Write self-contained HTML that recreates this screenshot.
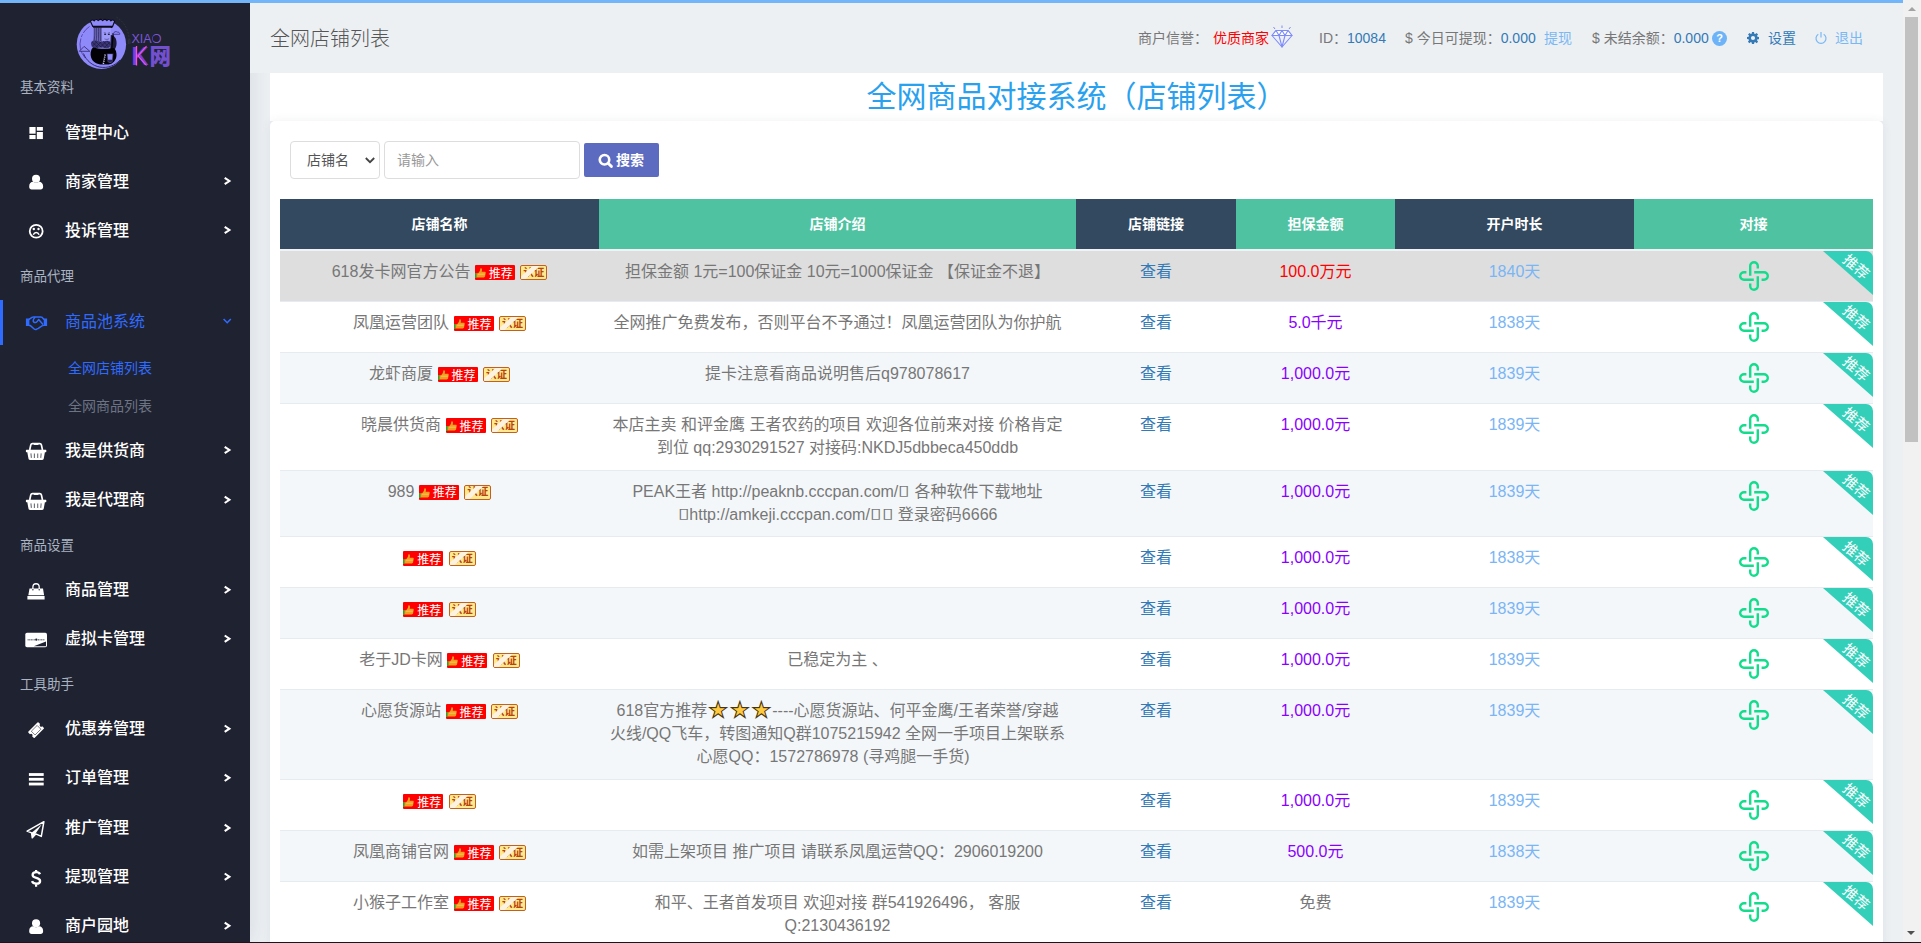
<!DOCTYPE html>
<html lang="zh-CN">
<head>
<meta charset="utf-8">
<title>全网店铺列表</title>
<style>
*{box-sizing:border-box}
html,body{margin:0;padding:0}
body{width:1921px;height:943px;overflow:hidden;position:relative;background:#ecf0f3;font-family:"Liberation Sans","Noto Sans CJK SC",sans-serif;font-size:14px;color:#777;line-height:1.42857}
a{text-decoration:none}
.pbar{position:absolute;left:0;top:0;width:1903px;height:3px;background:#72b5f8;z-index:50}
/* sidebar */
.sb{position:absolute;left:0;top:0;width:250px;height:943px;background:#1f2230;box-shadow:0 0 22px rgba(40,50,70,.11);z-index:5;color:#fff}
.logo{position:absolute;left:0;top:0;width:250px;height:75px}
.sb .lab{position:absolute;left:20px;font-size:13.5px;color:#a9b3c1;line-height:20px;height:20px;white-space:nowrap}
.sb .it{position:absolute;left:0;width:250px;height:45px;line-height:45px;font-size:16px;font-weight:500;color:#fff;white-space:nowrap}
.sb .it .tx{position:absolute;left:65px;top:0}
.sb svg.ov{position:absolute;left:0;top:0;pointer-events:none}
.sb .it.act{color:#2f6bff;font-weight:400}
.sb .it.act:before{content:"";position:absolute;left:0;top:1.3px;width:3px;height:45px;background:#2f6bff}
.sb .sub{position:absolute;left:68px;font-size:14px;line-height:20px;color:#6c7484;white-space:nowrap}
.sb .sub.on{color:#2f6bff}
/* header */
.hd{position:absolute;left:250px;top:0;width:1653px;height:73px;background:#ecf0f3;z-index:10}
.hd h1{position:absolute;left:20px;top:24px;margin:0;font-size:20px;font-weight:300;color:#555;line-height:30px;white-space:nowrap}
.hd .inf{position:absolute;top:28px;font-size:14px;line-height:20px;white-space:nowrap;color:#777}
.hd .bl{color:#337ab7}
.hd .lb{color:#7ab8f5}
.hd .rd{color:#f00}
/* main */
.tcard{position:absolute;left:270px;top:73px;width:1613px;height:48px;background:#fff;z-index:2}
.tcard h2{margin:0;position:absolute;left:0;top:4px;width:100%;text-align:center;font-size:30px;line-height:40px;font-weight:400;color:#2aa1ee;white-space:nowrap}
.panel{position:absolute;left:270px;top:121px;width:1613px;height:900px;background:#fff;border-radius:5px 5px 0 0;box-shadow:0 0 10px rgba(60,75,100,.08);z-index:3}
.sel{position:absolute;left:20px;top:20px;width:90px;height:38px;border:1px solid #ddd;border-radius:4px;background:#fff;font-size:14px;color:#555;line-height:36px;padding-left:16px}
.sel svg{position:absolute;right:3px;top:12px}
.inp{position:absolute;left:114px;top:20px;width:196px;height:38px;border:1px solid #ddd;border-radius:4px;background:#fff;font-size:14px;color:#999;line-height:36px;padding-left:12px}
.btn{position:absolute;left:314px;top:22px;width:75px;height:34px;border-radius:2px;background:#5c6bc0;color:#fff;font-size:14px;font-weight:700;line-height:34px}
.btn svg{position:absolute;left:14px;top:10px}
.btn span{position:absolute;left:32px;top:0}
table{position:absolute;left:10px;top:78px;width:1593px;border-collapse:separate;border-spacing:0;table-layout:fixed;font-size:16px;color:#777}
th{height:52px;padding:2px 0 0;background:#4fc3a1;color:#fff;font-size:14px;font-weight:700;text-align:center;border-bottom:2px solid #f0f3f6}
th.d{background:#324960}
td{height:51px;padding:10px 8px;text-align:center;vertical-align:top;border-top:1px solid #e6ebf0;line-height:22.857px;position:relative}
tbody tr:nth-child(odd){background:#f4f7fa}
tbody tr:nth-child(even){background:#fff}
tbody tr.hov{background:#dedede}
tbody tr:first-child td{border-top:0;height:50px}
.lk{color:#337ab7}
.red{color:#f00}.pur{color:#8a00ff}.gry{color:#777}.dy{color:#7ab5f5}
td.op{padding:10px 0 0}
.cross{display:block;margin:0 auto;position:relative;left:0;top:0}
.rb{position:absolute;right:0;top:0;width:50px;height:44px;overflow:hidden;border-top-right-radius:7px}
.rb:before{content:"";position:absolute;left:0;top:0;border-style:solid;border-width:0 50px 44px 0;border-color:transparent #33cfb9 transparent transparent}
.rb em{position:absolute;left:11.1px;top:7.2px;width:44px;font-style:normal;color:#fff;font-size:14.5px;line-height:18px;transform:rotate(41deg);transform-origin:50% 50%;text-align:center;white-space:nowrap}
.bd-tj{display:inline-block;vertical-align:-3px;width:40px;height:15px;background:#f00;border-radius:1px;position:relative;overflow:hidden}
.bd-tj svg{position:absolute;left:0;top:1px}
.bd-tj b{position:absolute;left:14px;top:1.5px;font-size:12px;line-height:15px;color:#fff;font-weight:400;letter-spacing:0}
.bd-rz{display:inline-block;vertical-align:-3px;width:27px;height:15px;background:#ffe98f;border:1px solid #c4601c;border-radius:2px;position:relative;overflow:hidden;margin-left:1px}
.bd-rz b{position:absolute;left:2px;top:-.3px;font-size:10.5px;line-height:13px;color:#b8430e;font-weight:700;letter-spacing:0}
.bd-rz:after{content:"";position:absolute;left:5px;top:-7px;width:5px;height:28px;background:#fcf2e0;transform:rotate(47deg)}
.tf{display:inline-block;width:11.8px;text-align:center;line-height:0;font-style:normal;font-family:"DejaVu Sans",sans-serif;font-size:14.5px;transform:translateY(-2.5px) scaleX(1.45)}
.star{display:inline-block;width:21.7px;text-align:center;line-height:0;color:#ffc93e;-webkit-text-stroke:2.2px #47350f;paint-order:stroke fill;font-family:"DejaVu Sans",sans-serif;font-size:17.5px}
/* scrollbar */
.scr{position:absolute;left:1903px;top:0;width:18px;height:943px;background:#f1f1f1;z-index:60}
.scr .thumb{position:absolute;left:2px;top:17px;width:13px;height:425px;background:#c1c1c1}
.scr .up{position:absolute;left:4.5px;top:7px;width:0;height:0;border:4.5px solid transparent;border-top:0;border-bottom:4.5px solid #a3a3a3}
.scr .dn{position:absolute;left:4px;top:931px;width:0;height:0;border:4.5px solid transparent;border-bottom:0;border-top:4.5px solid #505050}
.bline{position:absolute;left:0;top:942px;width:1921px;height:1px;background:#16181f;z-index:70}
</style>
</head>
<body>
<div class="pbar"></div>
<div class="sb">
<div class="logo"><svg width="250" height="75" viewBox="0 0 250 75">
<circle cx="101.400" cy="44.200" r="24.700" fill="#8e8af9"/>
<path d="M89.500 26.500a21.300 21.300 0 0 0-4.300 31.500" fill="none" stroke="#4b3a9c" stroke-width=".8" stroke-dasharray="9 1.500 3 1.500 30"/>
<path d="M83.500 53.500a21.600 21.600 0 0 0 36.500 6.500" fill="none" stroke="#2e2468" stroke-width=".9"/>
<path d="M116.500 17.200c7.500 4.500 12.300 12.500 12.800 23.500" fill="none" stroke="#3a3a48" stroke-width=".7" stroke-dasharray="1.600 1.600"/>
<path d="M128.300 39.500v4.500M130 39.500v4.500" stroke="#3a3a48" stroke-width=".7"/>
<path d="M90.400 21.200c1.200-1.600 2.600-1.600 3.800-.3 1.200-1.800 2.800-1.800 4-.3 1.300-1.700 3.200-1.700 4.500 0 1.300-1.600 3-1.600 4.200 0 1.200-1.500 2.800-1.500 4 .3 1.200-1.300 2.600-1.200 3.700.3l-2 5.300H92.800z" fill="#8e8af9" stroke="#0d0b18" stroke-width="1.100" stroke-linejoin="round"/>
<path d="M92.800 25.700h20l-.4 2.200H93.300z" fill="#0d0b18"/>
<path d="M93.400 27.800h8.600l.3 13.500-9.500 1.200c.6-4.500.8-9.500.6-14.700z" fill="#6e69be"/>
<path d="M94.800 28c.2 5-.1 9.500-.7 13.800M96.600 28c.2 5 0 9.500-.4 13.600M98.400 28c.2 5 .1 9 0 13.300M100.200 28l.2 13" stroke="#2b2658" stroke-width=".7" fill="none"/>
<path d="M102 27.800h8.800c.5 4.500.4 8.500-.4 12.500l-8.200 1z" fill="#9d99fa"/>
<path d="M104.200 34.300h1.900M107.900 34.300h1.900" stroke="#0d0b18" stroke-width="1"/>
<path d="M103.800 32.700l2.300.5M110 32.600l-2.200.6" stroke="#2b2658" stroke-width=".5"/>
<path d="M104.500 38.900c1.500.700 3.200.700 4.600-.2" stroke="#4a4590" stroke-width=".7" fill="none"/>
<path d="M110.800 35c3.500.5 5.800 3.500 5.800 8 0 3-1 5.500-2.500 7.200l-3.800-1.500z" fill="#1c1838"/>
<path d="M91 43.500c0-2.200 2-3.500 4.500-3 2 .4 3.500 1.200 5.500 1.200s3.800-1 6-1c2.500 0 4 1 4 3.200 0 2.800-2 4.300-4.500 4.300-2 0-3.500-.6-5.500-.6s-3.500.8-5.500.6c-2.500-.2-4.500-1.900-4.500-4.700z" fill="#3b3675"/>
<path d="M92 42l6 5.500M95 41l6.500 6.500M99 41.500l6 6M103 41l5.500 6M107 41l3.500 4M92 46.500l5-5M95.500 47.500l6-6M100 47.500l6-6M104.500 47.500l5.500-5.500" stroke="#151230" stroke-width=".5"/>
<path d="M93 47.300c-2.500 2.500-3 7-1.800 10.500 1.600 4.300 5.800 6.800 11 6.800h6.500c4.500-.8 7.500-4.500 7.800-9 .2-3-.6-5.800-2.600-7.600-5 1-15 1.300-20.900-.7z" fill="#020106"/>
<path d="M113.300 33l-1.900 19.500" stroke="#020106" stroke-width="1.300"/>
<path d="M113.300 33.600c.6-1.800 2.600-2.600 4-1.500 1.500-.3 2.600.8 2.400 2.200h-6.800z" fill="#8e8af9" stroke="#2e2468" stroke-width=".7" stroke-linejoin="round"/>
<path d="M106.900 53.600h6.300l-.4 7.400c-.1 1.300-1 2-2.700 2s-2.700-.700-2.800-2z" fill="#8e8af9" stroke="#0d0b18" stroke-width=".9"/>
<path d="M107.600 59.800h4.900v1.800c-1.500 1-3.400 1-4.900 0z" fill="#2b2658"/>
<path d="M105.200 54.500l-2 10" stroke="#d9d7ff" stroke-width="1.500" stroke-dasharray="1.100 1"/>
<path d="M79.300 51.300l4.800-4.900 5.700 4.900z" fill="#8e8af9" stroke="#2e2468" stroke-width=".8" stroke-linejoin="round"/>
<text x="131.500" y="43.200" font-family="Liberation Sans,sans-serif" font-size="13.500" fill="#7a56d6" textLength="30" lengthAdjust="spacingAndGlyphs" font-weight="400">XIAO</text>
<circle cx="156.100" cy="38.500" r="3.300" fill="#241d2e"/>
<text x="131.500" y="65" font-family="Liberation Sans,sans-serif" font-size="26.500" font-weight="700" fill="#7a3fe0" textLength="17" lengthAdjust="spacingAndGlyphs">K</text>
<path d="M136.500 46v19.500" stroke="#ff4fd8" stroke-width="1.300"/>
<path d="M146.500 46l-8.500 10 8.500 9.500" stroke="#ff4fd8" stroke-width="1.100" fill="none"/>
<text x="149.500" y="64" font-family="Noto Sans CJK SC,sans-serif" font-size="22" font-weight="900" fill="#7250d0" textLength="21.500" lengthAdjust="spacingAndGlyphs">网</text>
</svg></div>
<div class="lab" style="top:77.8px">基本资料</div>
<div class="it" style="top:109.5px"><span class="tx">管理中心</span></div>
<div class="it" style="top:158.5px"><span class="tx">商家管理</span></div>
<div class="it" style="top:207.5px"><span class="tx">投诉管理</span></div>
<div class="lab" style="top:266.8px">商品代理</div>
<div class="it act" style="top:298.7px"><span class="tx">商品池系统</span></div>
<a class="sub on" style="top:357.6px">全网店铺列表</a>
<a class="sub" style="top:395.7px">全网商品列表</a>
<div class="it" style="top:427.5px"><span class="tx">我是供货商</span></div>
<div class="it" style="top:477.3px"><span class="tx">我是代理商</span></div>
<div class="lab" style="top:535.8px">商品设置</div>
<div class="it" style="top:567.3px"><span class="tx">商品管理</span></div>
<div class="it" style="top:616.2px"><span class="tx">虚拟卡管理</span></div>
<div class="lab" style="top:674.7px">工具助手</div>
<div class="it" style="top:706.2px"><span class="tx">优惠券管理</span></div>
<div class="it" style="top:755.3px"><span class="tx">订单管理</span></div>
<div class="it" style="top:805.4px"><span class="tx">推广管理</span></div>
<div class="it" style="top:854.2px"><span class="tx">提现管理</span></div>
<div class="it" style="top:903.3px"><span class="tx">商户园地</span></div>
<svg class="ov" width="250" height="943" viewBox="0 0 250 943">
<g transform="translate(0 0)" fill="#fff"><rect x="29.400" y="127" width="6.200" height="6.700"/><rect x="29.400" y="135" width="6.200" height="4.050"/><rect x="36.800" y="127" width="6.100" height="3.700"/><rect x="36.800" y="132" width="6.100" height="7.050"/></g>
<g transform="translate(0 0)" fill="#fff"><circle cx="36.050" cy="178.700" r="4.050"/><path d="M29.200 186.200c0-2.800 1.700-4.500 4-4.500.9.700 1.800 1 2.900 1s2-.3 2.900-1c2.300 0 4.100 1.700 4.100 4.500v.8c0 1.400-1 2.400-2.400 2.400h-9.100c-1.400 0-2.400-1-2.400-2.400z"/></g>
<path d="M224.700 177.8l4.700 3.200-4.700 3.200" fill="none" stroke="#fff" stroke-width="2.100"/>
<g transform="translate(0 0)"><circle cx="36.200" cy="231.250" r="6.450" fill="none" stroke="#fff" stroke-width="1.800"/><circle cx="33.800" cy="229.050" r="1.200" fill="#fff"/><circle cx="38.500" cy="229.050" r="1.200" fill="#fff"/><path d="M33.300 234.700c.6-1.500 1.700-2.300 2.900-2.300s2.300.8 2.900 2.300" fill="none" stroke="#fff" stroke-width="1.500"/></g>
<path d="M224.700 226.8l4.700 3.200-4.700 3.200" fill="none" stroke="#fff" stroke-width="2.100"/>
<g transform="translate(0 0)"><path d="M25.900 318.600h3.500v7.500h-3.500zM43.700 318.600h3.400v7.500h-3.400z" fill="#2f6bff"/><g fill="none" stroke="#2f6bff" stroke-width="1.500" stroke-linejoin="round" stroke-linecap="round"><path d="M29.400 319.200l2.600-1.900c.5-.3 1-.4 1.500-.4h7.300c.5 0 1 .2 1.400.5l1.600 1.800"/><path d="M29.400 325.400l1 .2 3.500 3.100c.8.700 1.800.9 2.700.5l1.700-.9 3.700-2.400 1.800-.5"/><path d="M34.800 317.500c-1.100 1.100-1.800 2.300-1.600 3.500.3 1.500 1.900 1.900 3 1.300 1-.5 1.600-1.500 2.500-2.800l3.900 4.600"/></g></g>
<path d="M223.600 319l3.600 3.700 3.600-3.700" fill="none" stroke="#2f6bff" stroke-width="1.600"/>
<g transform="translate(0 0)"><path d="M29.700 450l1.100-5.100c.2-.8.800-1.300 1.600-1.300h7.400c.8 0 1.400.5 1.600 1.300l1.100 5.100" fill="none" stroke="#fff" stroke-width="1.700"/><rect x="33.600" y="443" width="5" height="2.100" rx="1" fill="#fff"/><path fill="#fff" d="M26.400 449.800h19.400c.3 0 .5.200.5.500v1.500c0 .3-.2.500-.5.500h-.9l-1.200 6.500c-.1.700-.7 1.200-1.400 1.200H29.900c-.7 0-1.300-.5-1.400-1.200l-1.200-6.500h-.9c-.3 0-.5-.2-.5-.5v-1.500c0-.3.200-.5.500-.5z"/><path d="M30.900 453.400l.5 4.500M34.400 453.400v4.500M37.700 453.400v4.500M41.200 453.400l-.5 4.500" stroke="#6b6e78" stroke-width="1.100"/></g>
<path d="M224.700 446.8l4.700 3.200-4.700 3.200" fill="none" stroke="#fff" stroke-width="2.100"/>
<g transform="translate(0 50)"><path d="M29.700 450l1.100-5.100c.2-.8.800-1.300 1.600-1.300h7.400c.8 0 1.400.5 1.600 1.300l1.100 5.100" fill="none" stroke="#fff" stroke-width="1.700"/><rect x="33.600" y="443" width="5" height="2.100" rx="1" fill="#fff"/><path fill="#fff" d="M26.400 449.800h19.400c.3 0 .5.200.5.500v1.500c0 .3-.2.500-.5.500h-.9l-1.200 6.500c-.1.700-.7 1.200-1.400 1.200H29.900c-.7 0-1.300-.5-1.400-1.200l-1.200-6.500h-.9c-.3 0-.5-.2-.5-.5v-1.500c0-.3.200-.5.500-.5z"/><path d="M30.900 453.400l.5 4.500M34.400 453.400v4.500M37.700 453.400v4.500M41.200 453.400l-.5 4.500" stroke="#6b6e78" stroke-width="1.100"/></g>
<path d="M224.700 496.6l4.700 3.200-4.700 3.200" fill="none" stroke="#fff" stroke-width="2.100"/>
<g transform="translate(0 0)"><path d="M32.900 589.600v-2.700a3.150 3.150 0 0 1 6.300 0v2.700" fill="none" stroke="#fff" stroke-width="1.300"/><path fill="#fff" d="M29.500 588.400h13.500l1.100 6.800H28.300zM27.400 595.900h17.200v3.500H27.400z"/><circle cx="32.900" cy="589.800" r=".7" fill="#1f2230"/><circle cx="39.200" cy="589.800" r=".7" fill="#1f2230"/></g>
<path d="M224.700 586.6l4.700 3.200-4.700 3.200" fill="none" stroke="#fff" stroke-width="2.100"/>
<g transform="translate(0 0)"><rect x="25.300" y="632.800" width="21.700" height="14.500" rx="1.700" fill="#fff"/><path d="M46 641.500v4.800H33.800z" fill="#1f2230"/><circle cx="36.300" cy="639.700" r="1.150" fill="#1f2230"/><path d="M27.600 639.700h7.200M37.900 639.700h6.800" stroke="#7a7d86" stroke-width="1.500" stroke-dasharray="1.100 .5"/></g>
<path d="M224.700 635.5l4.700 3.200-4.700 3.200" fill="none" stroke="#fff" stroke-width="2.100"/>
<g transform="translate(36.100 730.2) rotate(-45)"><path fill="#fff" d="M-7.150 -3.650a.8.8 0 0 1 .8-.8h12.700a.8.8 0 0 1 .8.8v2.150a1.500 1.500 0 0 0 0 3v2.150a.8.8 0 0 1-.8.8h-12.700a.8.800 0 0 1-.8-.8v-2.150a1.500 1.500 0 0 0 0-3z"/><rect x="-4.100" y="-2.650" width="8.200" height="5.300" fill="none" stroke="#1f2230" stroke-width=".55"/></g>
<path d="M224.700 725.5l4.700 3.200-4.700 3.200" fill="none" stroke="#fff" stroke-width="2.100"/>
<g transform="translate(0 0)" fill="#fff"><rect x="28.900" y="773.100" width="14.800" height="2.850"/><rect x="28.900" y="777.850" width="14.800" height="2.850"/><rect x="28.900" y="782.600" width="14.800" height="2.850"/></g>
<path d="M224.700 774.6l4.700 3.200-4.700 3.200" fill="none" stroke="#fff" stroke-width="2.100"/>
<g transform="translate(23.600 818)"><path d="M20.300 3.700L3.500 13.100l4.500 1.800.7 4.900 3.400-3.900 5.600 2.500z" fill="none" stroke="#fff" stroke-width="1.500" stroke-linejoin="round"/><path d="M8 14.800L18.300 6.200 12 15.600l-3.300 4.300z" fill="#fff"/></g>
<path d="M224.700 824.7l4.700 3.200-4.700 3.200" fill="none" stroke="#fff" stroke-width="2.100"/>
<g transform="translate(0 0)"><path d="M40 874.300c-.6-1.400-2-2.100-3.800-2.100-2.100 0-3.600 1-3.600 2.700 0 1.700 1.400 2.300 3.700 2.900 2.300.6 3.800 1.300 3.800 3.100 0 1.800-1.600 2.800-3.800 2.800-2.100 0-3.700-.9-4.300-2.500" fill="none" stroke="#fff" stroke-width="2.300"/><path d="M36.100 869.900v2.500M36.100 884.300v2.400" stroke="#fff" stroke-width="2.200"/></g>
<path d="M224.700 873.5l4.700 3.200-4.700 3.200" fill="none" stroke="#fff" stroke-width="2.100"/>
<g transform="translate(0 744.6)" fill="#fff"><circle cx="36.050" cy="178.700" r="4.050"/><path d="M29.200 186.200c0-2.800 1.700-4.500 4-4.500.9.700 1.800 1 2.900 1s2-.3 2.900-1c2.300 0 4.100 1.700 4.100 4.500v.8c0 1.400-1 2.400-2.400 2.400h-9.100c-1.400 0-2.400-1-2.400-2.400z"/></g>
<path d="M224.700 922.6l4.700 3.200-4.700 3.200" fill="none" stroke="#fff" stroke-width="2.100"/>
</svg>
</div>
<div class="hd">
<h1>全网店铺列表</h1>
<span class="inf" style="left:888px">商户信誉：</span>
<span class="inf rd" style="left:963px">优质商家</span>
<svg style="position:absolute;left:1020px;top:24px" width="24" height="24" viewBox="0 0 24 24"><g fill="none" stroke="#7d8cf6" stroke-width="1.100" stroke-linejoin="round"><path d="M6 6.500h12l4 5-10 11.500L2 11.500z" fill="#eef0ff"/><path d="M6 6.500h12l4 5H2z" fill="#fff"/><path d="M2 11.500h20M6 6.500l3 5 3 11.500 3-11.500 3-5M9 11.500l3-5 3 5"/><path d="M12 1.500v2.500M3.500 3l1.500 2M20.500 3L19 5" stroke-width="1"/></g></svg>
<span class="inf" style="left:1069px">ID：<span class="bl">10084</span></span>
<span class="inf" style="left:1155px">$ 今日可提现：<span class="bl">0.000</span></span>
<span class="inf lb" style="left:1294px">提现</span>
<span class="inf" style="left:1342px">$ 未结余额：<span class="bl">0.000</span></span>
<span style="position:absolute;left:1462px;top:31px;width:15px;height:15px;border-radius:50%;background:#6db3f7;color:#fff;font-size:11px;font-weight:700;line-height:15px;text-align:center">?</span>
<svg style="position:absolute;left:1497px;top:32px" width="12" height="12" viewBox="0 0 14 14"><path fill="#337ab7" fill-rule="evenodd" d="M5.800 0h2.400l.3 1.900 1.100.5 1.600-1.200 1.700 1.700-1.200 1.600.5 1.100 1.900.300v2.400l-1.900.3-.5 1.100 1.200 1.600-1.700 1.700-1.600-1.200-1.100.5-.3 1.900H5.800l-.3-1.900-1.100-.5-1.600 1.200-1.700-1.700 1.200-1.600-.5-1.100L0 8.200V5.800l1.900-.3.500-1.100-1.200-1.600 1.700-1.700 1.600 1.200 1.100-.5zM7 4.600a2.400 2.400 0 1 0 0 4.800 2.400 2.400 0 0 0 0-4.800z"/></svg>
<span class="inf bl" style="left:1518px">设置</span>
<svg style="position:absolute;left:1564px;top:31px" width="14" height="14" viewBox="0 0 14 14"><path d="M4.300 3.200a5 5 0 1 0 5.400 0M7 1v5.500" fill="none" stroke="#7ab8f5" stroke-width="1.200"/></svg>
<span class="inf lb" style="left:1585px">退出</span>
</div>
<div class="tcard"><h2>全网商品对接系统（店铺列表）</h2></div>
<div class="panel">
<div class="sel">店铺名<svg width="12" height="12" viewBox="0 0 12 12"><path d="M1.800 4l4.200 4.200 4.200-4.200" fill="none" stroke="#444" stroke-width="1.800"/></svg></div>
<div class="inp">请输入</div>
<div class="btn"><svg width="16" height="16" viewBox="0 0 16 16"><circle cx="6.500" cy="6.700" r="4.750" fill="none" stroke="#fff" stroke-width="2.600"/><path d="M10.100 10.300l3.300 3.100" stroke="#fff" stroke-width="2.900" stroke-linecap="round"/></svg><span>搜索</span></div>
<table>
<colgroup><col style="width:319px"><col style="width:477px"><col style="width:160px"><col style="width:159px"><col style="width:239px"><col style="width:239px"></colgroup>
<thead><tr><th class="d">店铺名称</th><th>店铺介绍</th><th class="d">店铺链接</th><th>担保金额</th><th class="d">开户时长</th><th>对接</th></tr></thead>
<tbody>
<tr class="hov"><td>618发卡网官方公告 <span class="bd-tj"><svg class="th" width="12" height="13" viewBox="0 0 12 13"><path d="M1 7.2h2.2l1.3-1.6c.5-.7.6-1.6.7-2.6 0-.5.4-.9.9-.8.7.1 1 .8.9 1.700l-.3 1.900h3c.7 0 1.100.5 1 1.100l-.6 3.400c-.1.700-.6 1.100-1.300 1.100H1z" fill="#f0a020"/><path d="M0 7h1.600v5H0z" fill="#3a9a2a"/><path d="M3.500 8.200h6.500" stroke="#fff3c0" stroke-width=".8" stroke-dasharray="1 1"/></svg><b>推荐</b></span> <span class="bd-rz"><b>认证</b></span></td><td>担保金额 1元=100保证金 10元=1000保证金 【保证金不退】</td><td><a class="lk">查看</a></td><td class="red">100.0万元</td><td class="dy">1840天</td><td class="op"><svg class="cross" width="30" height="30" viewBox="0 0 30 30"><g fill="none" stroke="#13dc8c" stroke-width="2.4"><path d="M11.2 14.8V5a3.8 3.8 0 0 1 7.6 0v2.500"/><path d="M15.2 11.2H25a3.8 3.8 0 0 1 0 7.6h-2.400"/><path d="M18.8 15.2V25a3.8 3.8 0 0 1-7.6 0v-2.500"/><path d="M14.8 18.8H5a3.8 3.8 0 0 1 0-7.6h2.400"/></g></svg><span class="rb"><em>推荐</em></span></td></tr>
<tr><td>凤凰运营团队 <span class="bd-tj"><svg class="th" width="12" height="13" viewBox="0 0 12 13"><path d="M1 7.2h2.2l1.3-1.6c.5-.7.6-1.6.7-2.6 0-.5.4-.9.9-.8.7.1 1 .8.9 1.700l-.3 1.900h3c.7 0 1.100.5 1 1.100l-.6 3.400c-.1.700-.6 1.100-1.300 1.100H1z" fill="#f0a020"/><path d="M0 7h1.600v5H0z" fill="#3a9a2a"/><path d="M3.500 8.200h6.500" stroke="#fff3c0" stroke-width=".8" stroke-dasharray="1 1"/></svg><b>推荐</b></span> <span class="bd-rz"><b>认证</b></span></td><td>全网推广免费发布，否则平台不予通过！凤凰运营团队为你护航</td><td><a class="lk">查看</a></td><td class="pur">5.0千元</td><td class="dy">1838天</td><td class="op"><svg class="cross" width="30" height="30" viewBox="0 0 30 30"><g fill="none" stroke="#13dc8c" stroke-width="2.4"><path d="M11.2 14.8V5a3.8 3.8 0 0 1 7.6 0v2.500"/><path d="M15.2 11.2H25a3.8 3.8 0 0 1 0 7.6h-2.400"/><path d="M18.8 15.2V25a3.8 3.8 0 0 1-7.6 0v-2.500"/><path d="M14.8 18.8H5a3.8 3.8 0 0 1 0-7.6h2.400"/></g></svg><span class="rb"><em>推荐</em></span></td></tr>
<tr><td>龙虾商厦 <span class="bd-tj"><svg class="th" width="12" height="13" viewBox="0 0 12 13"><path d="M1 7.2h2.2l1.3-1.6c.5-.7.6-1.6.7-2.6 0-.5.4-.9.9-.8.7.1 1 .8.9 1.700l-.3 1.900h3c.7 0 1.100.5 1 1.100l-.6 3.400c-.1.700-.6 1.100-1.300 1.100H1z" fill="#f0a020"/><path d="M0 7h1.600v5H0z" fill="#3a9a2a"/><path d="M3.500 8.200h6.500" stroke="#fff3c0" stroke-width=".8" stroke-dasharray="1 1"/></svg><b>推荐</b></span> <span class="bd-rz"><b>认证</b></span></td><td>提卡注意看商品说明售后q978078617</td><td><a class="lk">查看</a></td><td class="pur">1,000.0元</td><td class="dy">1839天</td><td class="op"><svg class="cross" width="30" height="30" viewBox="0 0 30 30"><g fill="none" stroke="#13dc8c" stroke-width="2.4"><path d="M11.2 14.8V5a3.8 3.8 0 0 1 7.6 0v2.500"/><path d="M15.2 11.2H25a3.8 3.8 0 0 1 0 7.6h-2.400"/><path d="M18.8 15.2V25a3.8 3.8 0 0 1-7.6 0v-2.500"/><path d="M14.8 18.8H5a3.8 3.8 0 0 1 0-7.6h2.400"/></g></svg><span class="rb"><em>推荐</em></span></td></tr>
<tr><td>晓晨供货商 <span class="bd-tj"><svg class="th" width="12" height="13" viewBox="0 0 12 13"><path d="M1 7.2h2.2l1.3-1.6c.5-.7.6-1.6.7-2.6 0-.5.4-.9.9-.8.7.1 1 .8.9 1.700l-.3 1.900h3c.7 0 1.100.5 1 1.100l-.6 3.400c-.1.700-.6 1.100-1.300 1.100H1z" fill="#f0a020"/><path d="M0 7h1.600v5H0z" fill="#3a9a2a"/><path d="M3.500 8.200h6.500" stroke="#fff3c0" stroke-width=".8" stroke-dasharray="1 1"/></svg><b>推荐</b></span> <span class="bd-rz"><b>认证</b></span></td><td>本店主卖 和评金鹰 王者农药的项目 欢迎各位前来对接 价格肯定<br>到位 qq:2930291527 对接码:NKDJ5dbbeca450ddb</td><td><a class="lk">查看</a></td><td class="pur">1,000.0元</td><td class="dy">1839天</td><td class="op"><svg class="cross" width="30" height="30" viewBox="0 0 30 30"><g fill="none" stroke="#13dc8c" stroke-width="2.4"><path d="M11.2 14.8V5a3.8 3.8 0 0 1 7.6 0v2.500"/><path d="M15.2 11.2H25a3.8 3.8 0 0 1 0 7.6h-2.400"/><path d="M18.8 15.2V25a3.8 3.8 0 0 1-7.6 0v-2.500"/><path d="M14.8 18.8H5a3.8 3.8 0 0 1 0-7.6h2.400"/></g></svg><span class="rb"><em>推荐</em></span></td></tr>
<tr><td>989 <span class="bd-tj"><svg class="th" width="12" height="13" viewBox="0 0 12 13"><path d="M1 7.2h2.2l1.3-1.6c.5-.7.6-1.6.7-2.6 0-.5.4-.9.9-.8.7.1 1 .8.9 1.700l-.3 1.900h3c.7 0 1.100.5 1 1.100l-.6 3.400c-.1.700-.6 1.100-1.300 1.100H1z" fill="#f0a020"/><path d="M0 7h1.600v5H0z" fill="#3a9a2a"/><path d="M3.500 8.200h6.500" stroke="#fff3c0" stroke-width=".8" stroke-dasharray="1 1"/></svg><b>推荐</b></span> <span class="bd-rz"><b>认证</b></span></td><td>PEAK王者 http://peaknb.cccpan.com/<i class="tf">▯</i> 各种软件下载地址<br><i class="tf">▯</i>http://amkeji.cccpan.com/<i class="tf">▯</i><i class="tf">▯</i> 登录密码6666</td><td><a class="lk">查看</a></td><td class="pur">1,000.0元</td><td class="dy">1839天</td><td class="op"><svg class="cross" width="30" height="30" viewBox="0 0 30 30"><g fill="none" stroke="#13dc8c" stroke-width="2.4"><path d="M11.2 14.8V5a3.8 3.8 0 0 1 7.6 0v2.500"/><path d="M15.2 11.2H25a3.8 3.8 0 0 1 0 7.6h-2.400"/><path d="M18.8 15.2V25a3.8 3.8 0 0 1-7.6 0v-2.500"/><path d="M14.8 18.8H5a3.8 3.8 0 0 1 0-7.6h2.400"/></g></svg><span class="rb"><em>推荐</em></span></td></tr>
<tr><td><span class="bd-tj"><svg class="th" width="12" height="13" viewBox="0 0 12 13"><path d="M1 7.2h2.2l1.3-1.6c.5-.7.6-1.6.7-2.6 0-.5.4-.9.9-.8.7.1 1 .8.9 1.700l-.3 1.900h3c.7 0 1.100.5 1 1.100l-.6 3.400c-.1.700-.6 1.100-1.300 1.100H1z" fill="#f0a020"/><path d="M0 7h1.600v5H0z" fill="#3a9a2a"/><path d="M3.500 8.200h6.500" stroke="#fff3c0" stroke-width=".8" stroke-dasharray="1 1"/></svg><b>推荐</b></span> <span class="bd-rz"><b>认证</b></span></td><td></td><td><a class="lk">查看</a></td><td class="pur">1,000.0元</td><td class="dy">1838天</td><td class="op"><svg class="cross" width="30" height="30" viewBox="0 0 30 30"><g fill="none" stroke="#13dc8c" stroke-width="2.4"><path d="M11.2 14.8V5a3.8 3.8 0 0 1 7.6 0v2.500"/><path d="M15.2 11.2H25a3.8 3.8 0 0 1 0 7.6h-2.400"/><path d="M18.8 15.2V25a3.8 3.8 0 0 1-7.6 0v-2.500"/><path d="M14.8 18.8H5a3.8 3.8 0 0 1 0-7.6h2.400"/></g></svg><span class="rb"><em>推荐</em></span></td></tr>
<tr><td><span class="bd-tj"><svg class="th" width="12" height="13" viewBox="0 0 12 13"><path d="M1 7.2h2.2l1.3-1.6c.5-.7.6-1.6.7-2.6 0-.5.4-.9.9-.8.7.1 1 .8.9 1.700l-.3 1.900h3c.7 0 1.100.5 1 1.100l-.6 3.400c-.1.700-.6 1.100-1.300 1.100H1z" fill="#f0a020"/><path d="M0 7h1.600v5H0z" fill="#3a9a2a"/><path d="M3.500 8.200h6.500" stroke="#fff3c0" stroke-width=".8" stroke-dasharray="1 1"/></svg><b>推荐</b></span> <span class="bd-rz"><b>认证</b></span></td><td></td><td><a class="lk">查看</a></td><td class="pur">1,000.0元</td><td class="dy">1839天</td><td class="op"><svg class="cross" width="30" height="30" viewBox="0 0 30 30"><g fill="none" stroke="#13dc8c" stroke-width="2.4"><path d="M11.2 14.8V5a3.8 3.8 0 0 1 7.6 0v2.500"/><path d="M15.2 11.2H25a3.8 3.8 0 0 1 0 7.6h-2.400"/><path d="M18.8 15.2V25a3.8 3.8 0 0 1-7.6 0v-2.500"/><path d="M14.8 18.8H5a3.8 3.8 0 0 1 0-7.6h2.400"/></g></svg><span class="rb"><em>推荐</em></span></td></tr>
<tr><td>老于JD卡网 <span class="bd-tj"><svg class="th" width="12" height="13" viewBox="0 0 12 13"><path d="M1 7.2h2.2l1.3-1.6c.5-.7.6-1.6.7-2.6 0-.5.4-.9.9-.8.7.1 1 .8.9 1.700l-.3 1.900h3c.7 0 1.100.5 1 1.100l-.6 3.400c-.1.700-.6 1.100-1.300 1.100H1z" fill="#f0a020"/><path d="M0 7h1.600v5H0z" fill="#3a9a2a"/><path d="M3.500 8.200h6.500" stroke="#fff3c0" stroke-width=".8" stroke-dasharray="1 1"/></svg><b>推荐</b></span> <span class="bd-rz"><b>认证</b></span></td><td>已稳定为主 、</td><td><a class="lk">查看</a></td><td class="pur">1,000.0元</td><td class="dy">1839天</td><td class="op"><svg class="cross" width="30" height="30" viewBox="0 0 30 30"><g fill="none" stroke="#13dc8c" stroke-width="2.4"><path d="M11.2 14.8V5a3.8 3.8 0 0 1 7.6 0v2.500"/><path d="M15.2 11.2H25a3.8 3.8 0 0 1 0 7.6h-2.400"/><path d="M18.8 15.2V25a3.8 3.8 0 0 1-7.6 0v-2.500"/><path d="M14.8 18.8H5a3.8 3.8 0 0 1 0-7.6h2.400"/></g></svg><span class="rb"><em>推荐</em></span></td></tr>
<tr><td>心愿货源站 <span class="bd-tj"><svg class="th" width="12" height="13" viewBox="0 0 12 13"><path d="M1 7.2h2.2l1.3-1.6c.5-.7.6-1.6.7-2.6 0-.5.4-.9.9-.8.7.1 1 .8.9 1.700l-.3 1.900h3c.7 0 1.100.5 1 1.100l-.6 3.400c-.1.700-.6 1.100-1.300 1.100H1z" fill="#f0a020"/><path d="M0 7h1.600v5H0z" fill="#3a9a2a"/><path d="M3.500 8.200h6.500" stroke="#fff3c0" stroke-width=".8" stroke-dasharray="1 1"/></svg><b>推荐</b></span> <span class="bd-rz"><b>认证</b></span></td><td>618官方推荐<span class="star">★</span><span class="star">★</span><span class="star">★</span>----心愿货源站、何平金鹰/王者荣誉/穿越<br>火线/QQ飞车，转图通知Q群1075215942 全网一手项目上架联系<br>心愿QQ：1572786978 (寻鸡腿一手货)&nbsp;&nbsp;</td><td><a class="lk">查看</a></td><td class="pur">1,000.0元</td><td class="dy">1839天</td><td class="op"><svg class="cross" width="30" height="30" viewBox="0 0 30 30"><g fill="none" stroke="#13dc8c" stroke-width="2.4"><path d="M11.2 14.8V5a3.8 3.8 0 0 1 7.6 0v2.500"/><path d="M15.2 11.2H25a3.8 3.8 0 0 1 0 7.6h-2.400"/><path d="M18.8 15.2V25a3.8 3.8 0 0 1-7.6 0v-2.500"/><path d="M14.8 18.8H5a3.8 3.8 0 0 1 0-7.6h2.400"/></g></svg><span class="rb"><em>推荐</em></span></td></tr>
<tr><td><span class="bd-tj"><svg class="th" width="12" height="13" viewBox="0 0 12 13"><path d="M1 7.2h2.2l1.3-1.6c.5-.7.6-1.6.7-2.6 0-.5.4-.9.9-.8.7.1 1 .8.9 1.700l-.3 1.900h3c.7 0 1.100.5 1 1.100l-.6 3.400c-.1.700-.6 1.100-1.300 1.100H1z" fill="#f0a020"/><path d="M0 7h1.600v5H0z" fill="#3a9a2a"/><path d="M3.500 8.200h6.500" stroke="#fff3c0" stroke-width=".8" stroke-dasharray="1 1"/></svg><b>推荐</b></span> <span class="bd-rz"><b>认证</b></span></td><td></td><td><a class="lk">查看</a></td><td class="pur">1,000.0元</td><td class="dy">1839天</td><td class="op"><svg class="cross" width="30" height="30" viewBox="0 0 30 30"><g fill="none" stroke="#13dc8c" stroke-width="2.4"><path d="M11.2 14.8V5a3.8 3.8 0 0 1 7.6 0v2.500"/><path d="M15.2 11.2H25a3.8 3.8 0 0 1 0 7.6h-2.400"/><path d="M18.8 15.2V25a3.8 3.8 0 0 1-7.6 0v-2.500"/><path d="M14.8 18.8H5a3.8 3.8 0 0 1 0-7.6h2.400"/></g></svg><span class="rb"><em>推荐</em></span></td></tr>
<tr><td>凤凰商铺官网 <span class="bd-tj"><svg class="th" width="12" height="13" viewBox="0 0 12 13"><path d="M1 7.2h2.2l1.3-1.6c.5-.7.6-1.6.7-2.6 0-.5.4-.9.9-.8.7.1 1 .8.9 1.700l-.3 1.900h3c.7 0 1.100.5 1 1.100l-.6 3.400c-.1.700-.6 1.100-1.300 1.100H1z" fill="#f0a020"/><path d="M0 7h1.600v5H0z" fill="#3a9a2a"/><path d="M3.500 8.200h6.500" stroke="#fff3c0" stroke-width=".8" stroke-dasharray="1 1"/></svg><b>推荐</b></span> <span class="bd-rz"><b>认证</b></span></td><td>如需上架项目 推广项目 请联系凤凰运营QQ：2906019200</td><td><a class="lk">查看</a></td><td class="pur">500.0元</td><td class="dy">1838天</td><td class="op"><svg class="cross" width="30" height="30" viewBox="0 0 30 30"><g fill="none" stroke="#13dc8c" stroke-width="2.4"><path d="M11.2 14.8V5a3.8 3.8 0 0 1 7.6 0v2.500"/><path d="M15.2 11.2H25a3.8 3.8 0 0 1 0 7.6h-2.400"/><path d="M18.8 15.2V25a3.8 3.8 0 0 1-7.6 0v-2.500"/><path d="M14.8 18.8H5a3.8 3.8 0 0 1 0-7.6h2.400"/></g></svg><span class="rb"><em>推荐</em></span></td></tr>
<tr><td>小猴子工作室 <span class="bd-tj"><svg class="th" width="12" height="13" viewBox="0 0 12 13"><path d="M1 7.2h2.2l1.3-1.6c.5-.7.6-1.6.7-2.6 0-.5.4-.9.9-.8.7.1 1 .8.9 1.700l-.3 1.900h3c.7 0 1.100.5 1 1.100l-.6 3.400c-.1.700-.6 1.100-1.300 1.100H1z" fill="#f0a020"/><path d="M0 7h1.600v5H0z" fill="#3a9a2a"/><path d="M3.500 8.200h6.500" stroke="#fff3c0" stroke-width=".8" stroke-dasharray="1 1"/></svg><b>推荐</b></span> <span class="bd-rz"><b>认证</b></span></td><td>和平、王者首发项目 欢迎对接 群541926496， 客服<br>Q:2130436192</td><td><a class="lk">查看</a></td><td class="gry">免费</td><td class="dy">1839天</td><td class="op"><svg class="cross" width="30" height="30" viewBox="0 0 30 30"><g fill="none" stroke="#13dc8c" stroke-width="2.4"><path d="M11.2 14.8V5a3.8 3.8 0 0 1 7.6 0v2.500"/><path d="M15.2 11.2H25a3.8 3.8 0 0 1 0 7.6h-2.400"/><path d="M18.8 15.2V25a3.8 3.8 0 0 1-7.6 0v-2.500"/><path d="M14.8 18.8H5a3.8 3.8 0 0 1 0-7.6h2.400"/></g></svg><span class="rb"><em>推荐</em></span></td></tr>
</tbody>
</table>
</div>
<div class="scr"><i class="up"></i><div class="thumb"></div><i class="dn"></i></div>
<div class="bline"></div>
</body>
</html>
